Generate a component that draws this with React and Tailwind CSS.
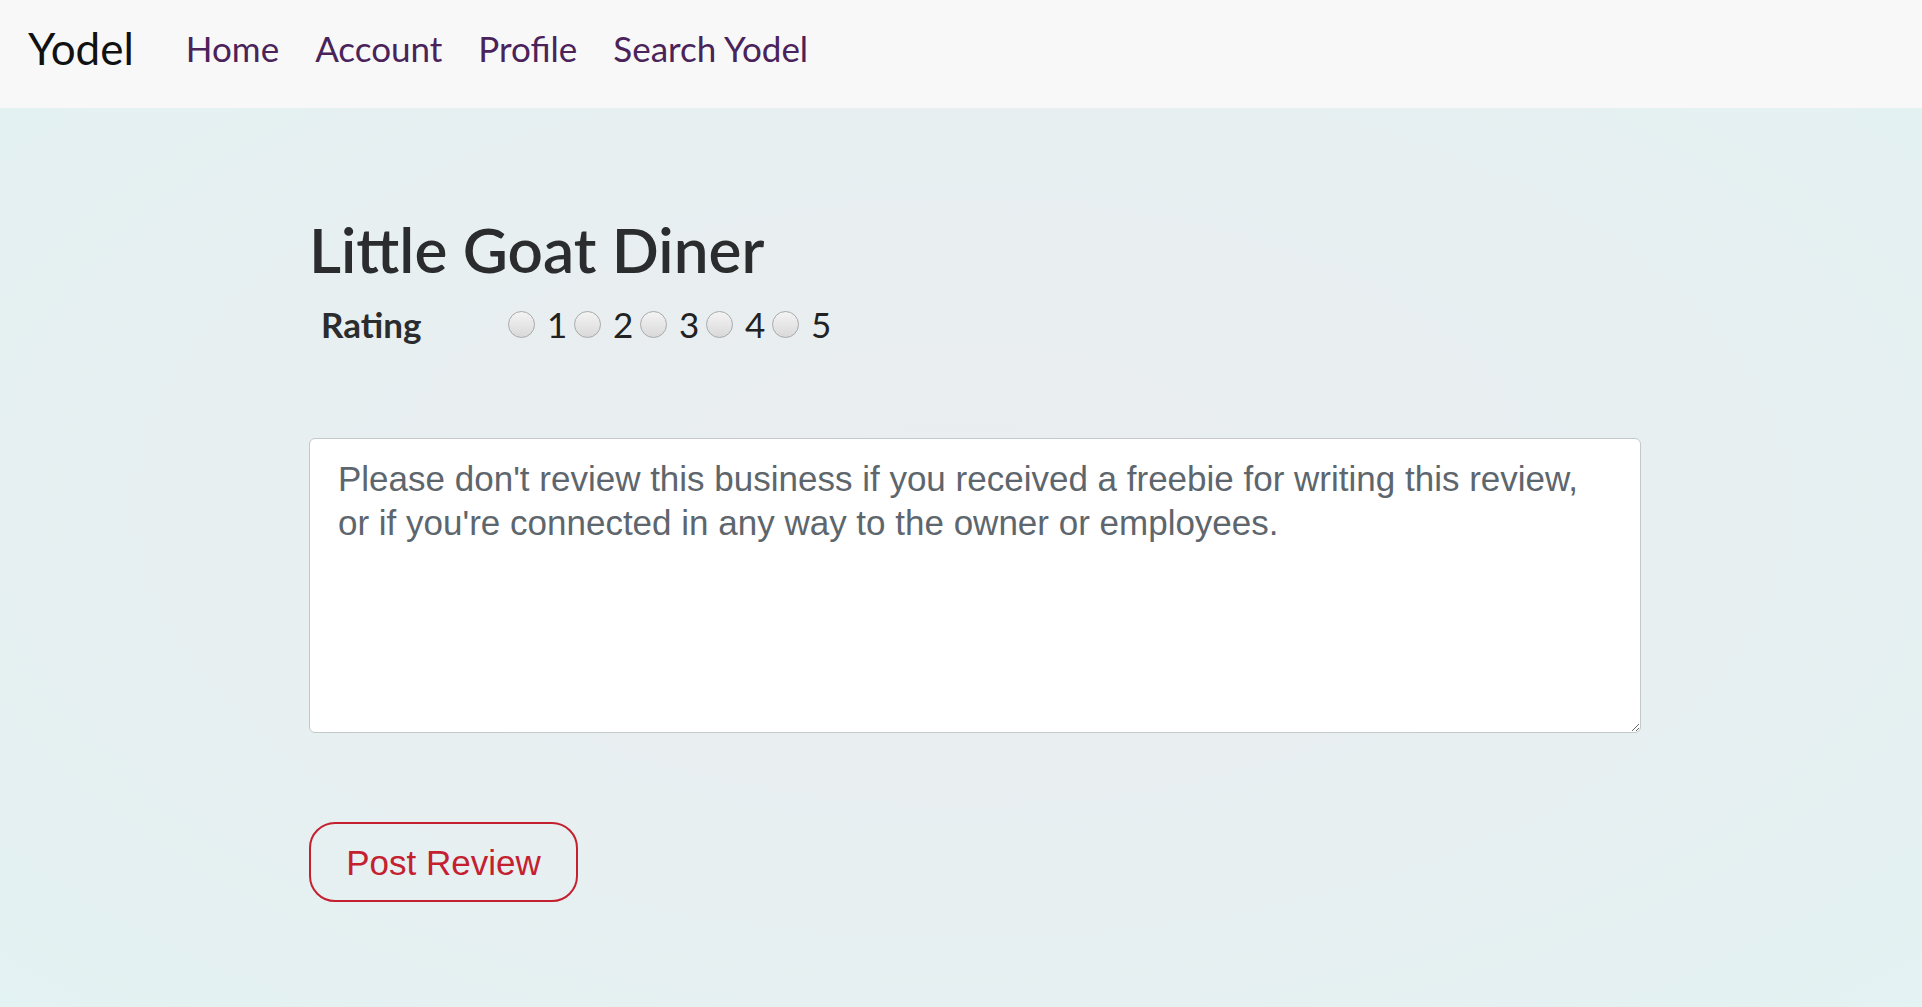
import React from "react";

const navLinks = ["Home", "Account", "Profile", "Search Yodel"];

export default function App() {
  return (
    <div className="min-h-screen bg-[radial-gradient(ellipse_at_center,#eaedf0_0%,#e8eff1_50%,#e3f2f2_100%)] font-['Lato','Noto_Sans',sans-serif]">
      {/* NAVBAR */}
      <nav className="h-[108px] bg-[#f8f8f8] flex items-center pl-[28px] pb-[12px]">
        <a className="text-[44px] leading-none text-[#111] mr-[34px]">Yodel</a>
        <ul className="flex items-center">
          {navLinks.map((l) => (
            <li key={l}>
              <a className="block px-[18px] text-[35px] leading-none text-[#4a235a]">{l}</a>
            </li>
          ))}
        </ul>
      </nav>

      {/* CONTENT */}
      <main className="pl-[309px] pt-[110px]">
        <h1 className="text-[62px] leading-none font-semibold text-[#2a2c2e]">Little Goat Diner</h1>

        <div className="flex items-center mt-[27px]">
          <label className="w-[199px] pl-[12px] text-[35px] leading-none font-bold text-[#2a2c2e]">Rating</label>
          <div className="flex items-center">
            {[1, 2, 3, 4, 5].map((n) => (
              <label key={n} className="w-[66px] flex items-center">
                <input
                  type="radio"
                  name="rating"
                  className="appearance-none shrink-0 w-[27px] h-[27px] rounded-full border border-[#a9a9a9] bg-[linear-gradient(#f4f4f4,#d9d9d9)]"
                />
                <span className="ml-[12px] text-[35px] leading-none text-[#222]">{n}</span>
              </label>
            ))}
          </div>
        </div>

        <textarea
          placeholder="Please don't review this business if you received a freebie for writing this review, or if you're connected in any way to the owner or employees."
          className="block mt-[96px] w-[1332px] h-[295px] bg-white border border-[#c4c8cb] rounded-[6px] pl-[28px] pr-[28px] pt-[18px] font-['Liberation_Sans',Arial,sans-serif] text-[35px] leading-[44px] text-[#5e666d] placeholder:text-[#5e666d] outline-none"
        />

        <button className="mt-[89px] w-[269px] h-[80px] border-2 border-[#c4202f] rounded-[26px] font-['Liberation_Sans',Arial,sans-serif] text-[35px] leading-none text-[#c4202f] flex items-center justify-center">
          Post Review
        </button>
      </main>
    </div>
  );
}
